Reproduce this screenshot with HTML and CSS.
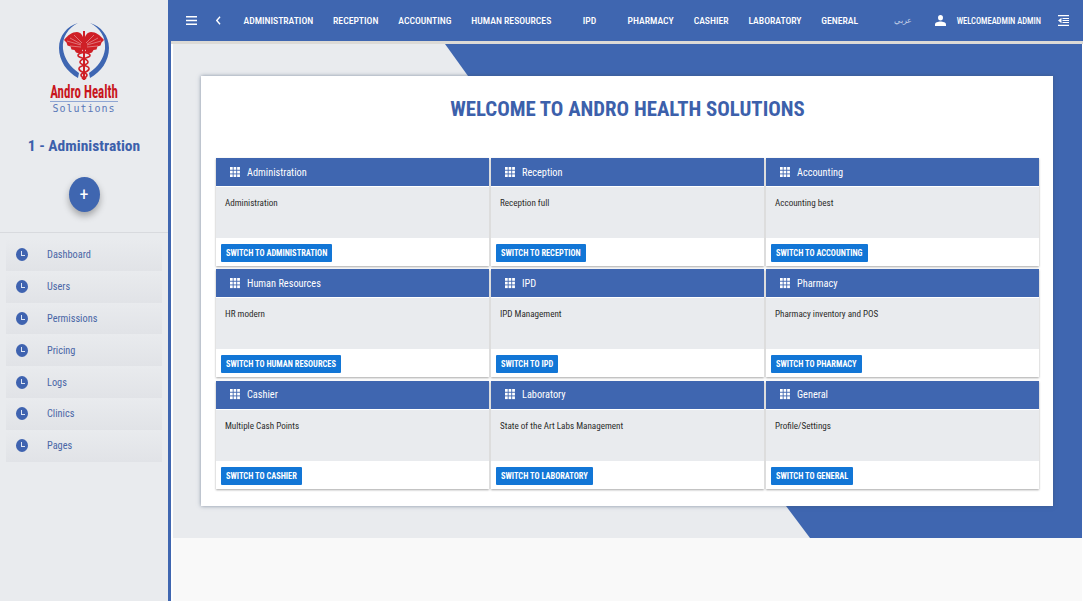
FILE: index.html
```html
<!DOCTYPE html>
<html>
<head>
    <title>Andro Health Solutions</title>
    <meta name="viewport" content="width=device-width, initial-scale=1" charset="UTF-8">
    <link rel="stylesheet" href="styles.css">
</head>
<body>
<div class="app">
    <aside class="sidebar">
        <div class="brand">
            <svg class="emblem" viewBox="0 0 50 58">
                <path d="M19 1C8 4 0 14 0 26c0 13 8 24 19 30l1-5C11 45 5 36 4 27 3 15 9 6 19 1z" fill="#3e66b2"/>
                <path d="M31 1c11 3 19 13 19 25 0 13-8 24-19 30l-1-5c9-6 15-15 16-24 1-12-5-21-15-26z" fill="#3e66b2"/>
                <path d="M24.500 16C23 12 21 10 18 10 13 10 9 13 5 18l2.500 2.500 1 3 3 1 1 3 3 .5 1.500 2.500 3 1 2-1 2.500-4z" fill="#cf1f26"/>
                <path d="M25.500 16C27 12 29 10 32 10c5 0 9 3 13 8l-2.500 2.500-1 3-3 1-1 3-3 .5-1.500 2.500-3 1-2-1-2.500-4z" fill="#cf1f26"/>
                <path d="M8 19l14 4M11 16l11 6M15 13l8 8M11 24l11 1M42 19l-14 4M39 16l-11 6M35 13l-8 8M39 24l-11 1" stroke="#f1c9cb" stroke-width=".5"/>
                <path d="M24 9h2v49h-2z" fill="#cf1f26"/>
                <path d="M20 28c2 3 10 2 11 5s-10 3-10 7 10 3 9 7-8 3-8 6 4 3 5 4" fill="none" stroke="#cf1f26" stroke-width="1.600"/>
                <path d="M30 28c-2 3-10 2-11 5s10 3 10 7-10 3-9 7 8 3 8 6-4 3-5 4" fill="none" stroke="#cf1f26" stroke-width="1.600"/>
            </svg>
            <div class="brand-name">Andro Health</div>
            <div class="brand-sub">Solutions</div>
        </div>
        <h2 class="module-title">1 - Administration</h2>
        <div class="fab-row"><button class="fab">+</button></div>
        <ul class="side-menu">
            <li><span class="clock"></span>Dashboard</li>
            <li><span class="clock"></span>Users</li>
            <li><span class="clock"></span>Permissions</li>
            <li><span class="clock"></span>Pricing</li>
            <li><span class="clock"></span>Logs</li>
            <li><span class="clock"></span>Clinics</li>
            <li><span class="clock"></span>Pages</li>
        </ul>
    </aside>
    <div class="main">
        <header class="topbar">
            <svg class="ico-menu" viewBox="0 0 12 9" preserveAspectRatio="none"><path d="M0 0h12v1.600H0zM0 3.700h12v1.600H0zM0 7.400h12V9H0z" fill="#fff"/></svg>
            <svg class="ico-back" viewBox="0 0 5 9" preserveAspectRatio="none"><path d="M4.500.700.900 4.500l3.600 3.800" fill="none" stroke="#fff" stroke-width="1.500"/></svg>
            <nav class="topnav">
                <a>ADMINISTRATION</a>
                <a>RECEPTION</a>
                <a>ACCOUNTING</a>
                <a>HUMAN RESOURCES</a>
                <a class="wide">IPD</a>
                <a>PHARMACY</a>
                <a>CASHIER</a>
                <a>LABORATORY</a>
                <a>GENERAL</a>
            </nav>
            <span class="lang">عربي</span>
            <svg class="ico-user" viewBox="0 0 12 11" preserveAspectRatio="none"><circle cx="6" cy="2.700" r="2.700" fill="#fff"/><path d="M0 11V9.400C0 7.400 3.500 6.500 6 6.500s6 .9 6 2.900V11z" fill="#fff"/></svg>
            <span class="user">WELCOMEADMIN ADMIN</span>
            <svg class="ico-indent" viewBox="0 0 11 11" preserveAspectRatio="none"><path d="M0 0h11v1.200H0zM0 9.800h11V11H0zM4.500 3h6.500v1.100H4.500zM4.500 5h6.500v1.100H4.500zM4.500 7h6.500v1.100H4.500zM3.500 2.700v5.600L0 5.500z" fill="#fff"/></svg>
        </header>
        <div class="stage">
            <div class="stage-shape"></div>
            <section class="panel">
                <h1 class="panel-title">WELCOME TO ANDRO HEALTH SOLUTIONS</h1>
                <div class="cards">
                    <div class="card">
                        <div class="card-head"><span class="dots"></span>Administration</div>
                        <div class="card-body">Administration</div>
                        <div class="card-foot"><button class="switch">SWITCH TO ADMINISTRATION</button></div>
                    </div>
                    <div class="card">
                        <div class="card-head"><span class="dots"></span>Reception</div>
                        <div class="card-body">Reception full</div>
                        <div class="card-foot"><button class="switch">SWITCH TO RECEPTION</button></div>
                    </div>
                    <div class="card">
                        <div class="card-head"><span class="dots"></span>Accounting</div>
                        <div class="card-body">Accounting best</div>
                        <div class="card-foot"><button class="switch">SWITCH TO ACCOUNTING</button></div>
                    </div>
                    <div class="card">
                        <div class="card-head"><span class="dots"></span>Human Resources</div>
                        <div class="card-body">HR modern</div>
                        <div class="card-foot"><button class="switch">SWITCH TO HUMAN RESOURCES</button></div>
                    </div>
                    <div class="card">
                        <div class="card-head"><span class="dots"></span>IPD</div>
                        <div class="card-body">IPD Management</div>
                        <div class="card-foot"><button class="switch">SWITCH TO IPD</button></div>
                    </div>
                    <div class="card">
                        <div class="card-head"><span class="dots"></span>Pharmacy</div>
                        <div class="card-body">Pharmacy inventory and POS</div>
                        <div class="card-foot"><button class="switch">SWITCH TO PHARMACY</button></div>
                    </div>
                    <div class="card">
                        <div class="card-head"><span class="dots"></span>Cashier</div>
                        <div class="card-body">Multiple Cash Points</div>
                        <div class="card-foot"><button class="switch">SWITCH TO CASHIER</button></div>
                    </div>
                    <div class="card">
                        <div class="card-head"><span class="dots"></span>Laboratory</div>
                        <div class="card-body">State of the Art Labs Management</div>
                        <div class="card-foot"><button class="switch">SWITCH TO LABORATORY</button></div>
                    </div>
                    <div class="card">
                        <div class="card-head"><span class="dots"></span>General</div>
                        <div class="card-body">Profile/Settings</div>
                        <div class="card-foot"><button class="switch">SWITCH TO GENERAL</button></div>
                    </div>
                </div>
            </section>
        </div>
        <div class="page-foot"></div>
    </div>
</div>
</body>
</html>
```

FILE: styles.css
```css
* { box-sizing: border-box; }

html, body {
    margin: 0;
    height: 100%;
    background: #fff;
    overflow: hidden;
}

body {
    font-family: Roboto, "Liberation Sans", sans-serif;
    font-stretch: 87%;
    color: #2b2b2b;
}

button { font-stretch: 87%; }

.app {
    display: flex;
    height: 601px;
}

/* left side */
.sidebar {
    width: 171px;
    flex: none;
    background: #e9ebee;
    border-right: 3px solid #3f66b0;
}

.brand {
    height: 115px;
    padding-top: 22px;
    text-align: center;
}

.emblem {
    display: block;
    width: 50px;
    height: 58px;
    margin: 0 auto;
}

.brand-name {
    margin-top: 3px;
    height: 17px;
    line-height: 17px;
    font-size: 18px;
    font-weight: 700;
    font-stretch: 75%;
    color: #c8161d;
    white-space: nowrap;
    transform: scaleX(.72);
}

.brand-sub {
    width: 68px;
    margin: 1px auto 0;
    border-top: 1px solid #8fa6d3;
    font-family: "DejaVu Sans Mono", monospace;
    font-size: 10px;
    line-height: 13px;
    letter-spacing: 1px;
    color: #5a78b8;
}

.module-title {
    margin: 21px 0 0;
    text-align: center;
    font-size: 15.500px;
    line-height: 20px;
    font-weight: 700;
    color: #3c60ab;
}

.fab-row {
    display: flex;
    justify-content: center;
    margin-top: 21px;
}

.fab {
    width: 31px;
    height: 35px;
    padding: 0;
    border: none;
    border-radius: 50%;
    background: #3f66b0;
    color: #fff;
    font-family: Roboto, sans-serif;
    font-size: 18px;
    box-shadow: 0 4px 7px rgba(0, 0, 0, .3);
}

.side-menu {
    list-style: none;
    margin: 20px 0 0;
    padding: 6px 6px 0;
    border-top: 1px solid #d8dade;
}

.side-menu li {
    display: flex;
    align-items: center;
    height: 31.800px;
    padding-left: 10px;
    font-size: 10.300px;
    color: #4a66a6;
    background: linear-gradient(#e9ebee, #e1e3e7);
}

.clock {
    position: relative;
    width: 12px;
    height: 13px;
    margin-right: 19px;
    border-radius: 50%;
    background: #3f63b0;
}

.clock::after {
    content: "";
    position: absolute;
    left: 5px;
    top: 3px;
    width: 3px;
    height: 4px;
    border-left: 1px solid #dfe6f3;
    border-bottom: 1px solid #dfe6f3;
}

/* top bar */
.main {
    flex: 1;
    display: flex;
    flex-direction: column;
    padding-left: 2px;
    min-width: 0;
}

.topbar {
    display: flex;
    align-items: center;
    height: 44px;
    margin-left: -2px;
    padding: 0 14px 0 15px;
    background: #3f66b0;
    border-bottom: 3px solid #dcdad6;
    color: #fff;
}

.ico-menu { width: 11px; height: 9px; flex: none; }
.ico-back { width: 4.500px; height: 9px; flex: none; margin-left: 19px; }

.topnav {
    display: flex;
    gap: 19.900px;
    margin-left: 23px;
    font-size: 9.700px;
    font-weight: 500;
    white-space: nowrap;
}

.topnav .wide { margin: 0 11.500px; }

.lang {
    margin-left: auto;
    font-size: 8px;
    color: #c9d4ea;
}

.ico-user { width: 11px; height: 11px; flex: none; margin-left: 23px; }

.user {
    margin-left: 11px;
    font-size: 8.500px;
    font-weight: 500;
    white-space: nowrap;
}

.ico-indent { width: 11px; height: 11px; flex: none; margin-left: 17px; }

/* welcome panel */
.stage {
    position: relative;
    height: 494px;
    margin-right: 1px;
    padding: 32px 29px 32px 28px;
    background: #e9ebee;
}

.stage-shape {
    position: absolute;
    inset: 0;
    background: #3f66b0;
    clip-path: polygon(272px 0, 100% 0, 100% 100%, 637px 100%, 613px 462px, 295px 32px);
}

.panel {
    position: relative;
    height: 430px;
    padding: 0 14px 0 15px;
    background: #fff;
    box-shadow: 0 0 4px rgba(60, 80, 110, .6);
}

.panel-title {
    margin: 0;
    padding-top: 21px;
    height: 82px;
    text-align: center;
    font-size: 20.800px;
    line-height: 25px;
    font-weight: 700;
    color: #3c60ab;
}

.cards {
    display: grid;
    grid-template-columns: repeat(3, 1fr);
    gap: 3.300px 2px;
}

.card {
    background: #fff;
    box-shadow: 0 1px 2px rgba(0, 0, 0, .35);
}

.card-head {
    display: flex;
    align-items: center;
    height: 28px;
    padding-left: 14px;
    font-size: 10.300px;
    color: #fff;
    background: #3f66b0;
}

.dots {
    width: 10px;
    height: 10.500px;
    margin-right: 7px;
    background: conic-gradient(from 270deg at 70% 70%, #fff 25%, transparent 0) 0 0 / 3.600px 3.700px;
}

.card-body {
    height: 51px;
    margin-top: 1px;
    padding: 11px 9px;
    font-size: 9.100px;
    line-height: 11px;
    background: #e9ebee;
}

.card-foot {
    height: 28px;
    padding: 6px 5px 0;
}

.switch {
    display: block;
    height: 18px;
    padding: 0 5px;
    border: none;
    border-radius: 1px;
    background: #1276d6;
    color: #fff;
    font-family: Roboto, sans-serif;
    font-weight: 700;
    font-size: 8.400px;
    white-space: nowrap;
}

.page-foot {
    flex: 1;
    background: #f9f9f9;
    margin-right: 1px;
}
```
